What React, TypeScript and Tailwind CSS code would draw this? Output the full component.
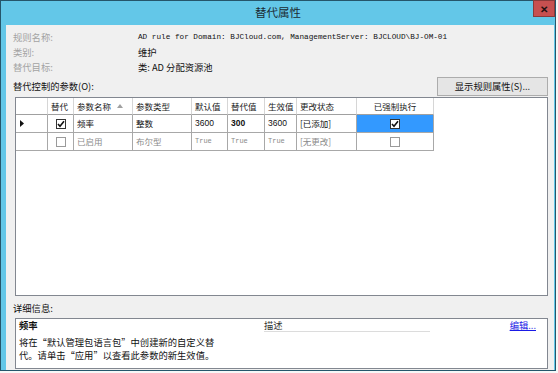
import React from 'react';

const cjk = "font-['Noto_Sans_CJK_SC',sans-serif]";
const mono = "font-['Liberation_Mono',monospace]";
const sans = "font-['Liberation_Sans',sans-serif]";

const Check = ({ checked, dim }: { checked?: boolean; dim?: boolean }) => (
  <span
    className={`flex h-[10px] w-[10px] items-center justify-center border bg-white ${
      dim ? 'border-[#9a9a9a]' : 'border-[#333333]'
    }`}
  >
    {checked && (
      <svg width="8" height="8" viewBox="0 0 8 8">
        <path d="M1 4 L3 6.2 L7 1.3" fill="none" stroke="#111" strokeWidth="1.6" />
      </svg>
    )}
  </span>
);

const cols = 'grid grid-cols-[32px_26px_59px_59px_36px_37px_32px_60px_77px] w-[418px]';

const InfoRow = ({ label, children }: { label: string; children: React.ReactNode }) => (
  <div className="flex h-[15px] items-center">
    <span className={`w-[125px] text-[9.3px] leading-none text-[#a3a3a3] ${cjk}`}>{label}</span>
    {children}
  </div>
);

export default function App() {
  const head = `flex h-[17px] items-center overflow-hidden whitespace-nowrap border-r border-b border-r-[#d6d6d6] border-b-[#a0a0a0] px-[3px] text-[8.5px] leading-none text-[#1a1a1a] ${cjk}`;
  const cell = 'flex h-[18px] items-center overflow-hidden whitespace-nowrap border-r border-b border-[#a8a8a8] px-[3px] leading-none';

  return (
    <div className="h-[373px] w-[558px] overflow-hidden bg-[#f7f7f7]">
      <div className="flex h-[371px] w-[556px] flex-col border border-[#25566b] bg-[#63c7e8]">
        {/* title bar */}
        <div className="relative flex h-[24px] items-center justify-center">
          <span className={`text-[11.5px] leading-none text-[#1b2b33] ${cjk}`}>替代属性</span>
          <div className="absolute right-0 top-[-1px] flex h-[17px] w-[22px] items-center justify-center border border-[#8a3a3a] bg-[#c75050] text-[10px] font-bold leading-none text-[#221111]">
            ✕
          </div>
        </div>

        <div className="flex min-h-0 flex-1">
          <div className="w-[5px]" />
          <div className="flex flex-1 flex-col bg-[#f0f0f0] pl-[7px] pr-[6px] pt-[5px]">
            <InfoRow label="规则名称:">
              <span className={`text-[7.7px] leading-none text-[#111] ${mono}`}>
                AD rule for Domain: BJCloud.com, ManagementServer: BJCLOUD\BJ-OM-01
              </span>
            </InfoRow>
            <InfoRow label="类别:">
              <span className={`text-[9.3px] leading-none text-[#111] ${cjk}`}>维护</span>
            </InfoRow>
            <InfoRow label="替代目标:">
              <span className={`text-[9.3px] leading-none text-[#111] ${cjk}`}>类: AD 分配资源池</span>
            </InfoRow>

            <div className="mt-[2px] flex items-center justify-between">
              <span className={`text-[9.3px] leading-none text-[#111] ${cjk}`}>替代控制的参数(O):</span>
              <button
                className={`flex h-[19px] w-[111px] items-center justify-center border border-[#acacac] bg-[#e5e5e5] text-[9.3px] leading-none text-[#111] ${cjk}`}
              >
                显示规则属性(S)...
              </button>
            </div>

            {/* parameter grid */}
            <div className="ml-[2px] mt-[1px] h-[199px] border border-[#828790] bg-white">
              <div className={cols}>
                <div className="h-[17px] border-b border-r border-b-[#a0a0a0] border-r-[#d6d6d6]" />
                <div className={head}>替代</div>
                <div className={`${head} justify-between`}>
                  <span>参数名称</span>
                  <svg width="6" height="4" viewBox="0 0 6 4" className="mr-[6px]">
                    <path d="M0 4 L3 0 L6 4 Z" fill="#a0a0a0" />
                  </svg>
                </div>
                <div className={head}>参数类型</div>
                <div className={head}>默认值</div>
                <div className={head}>替代值</div>
                <div className={head}>生效值</div>
                <div className={head}>更改状态</div>
                <div className={`${head} justify-center`}>已强制执行</div>
              </div>

              <div className={`${cols} text-[8.5px] text-[#111]`}>
                <div className={`${cell} pl-[4px]`}>
                  <svg width="4" height="7" viewBox="0 0 4 7">
                    <path d="M0 0 L4 3.5 L0 7 Z" fill="#111" />
                  </svg>
                </div>
                <div className={`${cell} justify-center`}>
                  <Check checked />
                </div>
                <div className={`${cell} ${cjk}`}>频率</div>
                <div className={`${cell} ${cjk}`}>整数</div>
                <div className={`${cell} ${sans}`}>3600</div>
                <div className={`${cell} ${sans} font-bold`}>300</div>
                <div className={`${cell} ${sans}`}>3600</div>
                <div className={`${cell} ${cjk}`}>[已添加]</div>
                <div className={`${cell} justify-center bg-[#3399ff]`}>
                  <Check checked />
                </div>
              </div>

              <div className={`${cols} text-[8.5px] text-[#8a8a8a]`}>
                <div className={cell} />
                <div className={`${cell} justify-center`}>
                  <Check dim />
                </div>
                <div className={`${cell} ${cjk}`}>已启用</div>
                <div className={`${cell} ${cjk}`}>布尔型</div>
                <div className={`${cell} ${mono} text-[7px]`}>True</div>
                <div className={`${cell} ${mono} text-[7px]`}>True</div>
                <div className={`${cell} ${mono} text-[7px]`}>True</div>
                <div className={`${cell} ${cjk}`}>[无更改]</div>
                <div className={`${cell} justify-center`}>
                  <Check dim />
                </div>
              </div>
            </div>

            <div className={`mt-[5px] h-[14px] text-[9.3px] leading-[14px] text-[#111] ${cjk}`}>详细信息:</div>

            {/* details */}
            <div className={`ml-[2px] mt-[3px] h-[51px] border border-[#828790] bg-white text-[9.3px] text-[#111] ${cjk}`}>
              <div className="flex h-[13px] items-center">
                <span className="w-[248px] pl-[3px] font-bold leading-none">频率</span>
                <span className="flex-1 border-b border-b-[#dcdcdc] leading-[12px] text-[#333]">描述</span>
                <span className="ml-[80px] mr-[11px] leading-none text-[#1a1ae6] underline">编辑...</span>
              </div>
              <div className="mt-[4px] pl-[3px] leading-[13px]">
                <div>将在“默认管理包语言包”中创建新的自定义替</div>
                <div>代。请单击“应用”以查看此参数的新生效值。</div>
              </div>
            </div>
          </div>
          <div className="w-[1px]" />
        </div>
      </div>
    </div>
  );
}
